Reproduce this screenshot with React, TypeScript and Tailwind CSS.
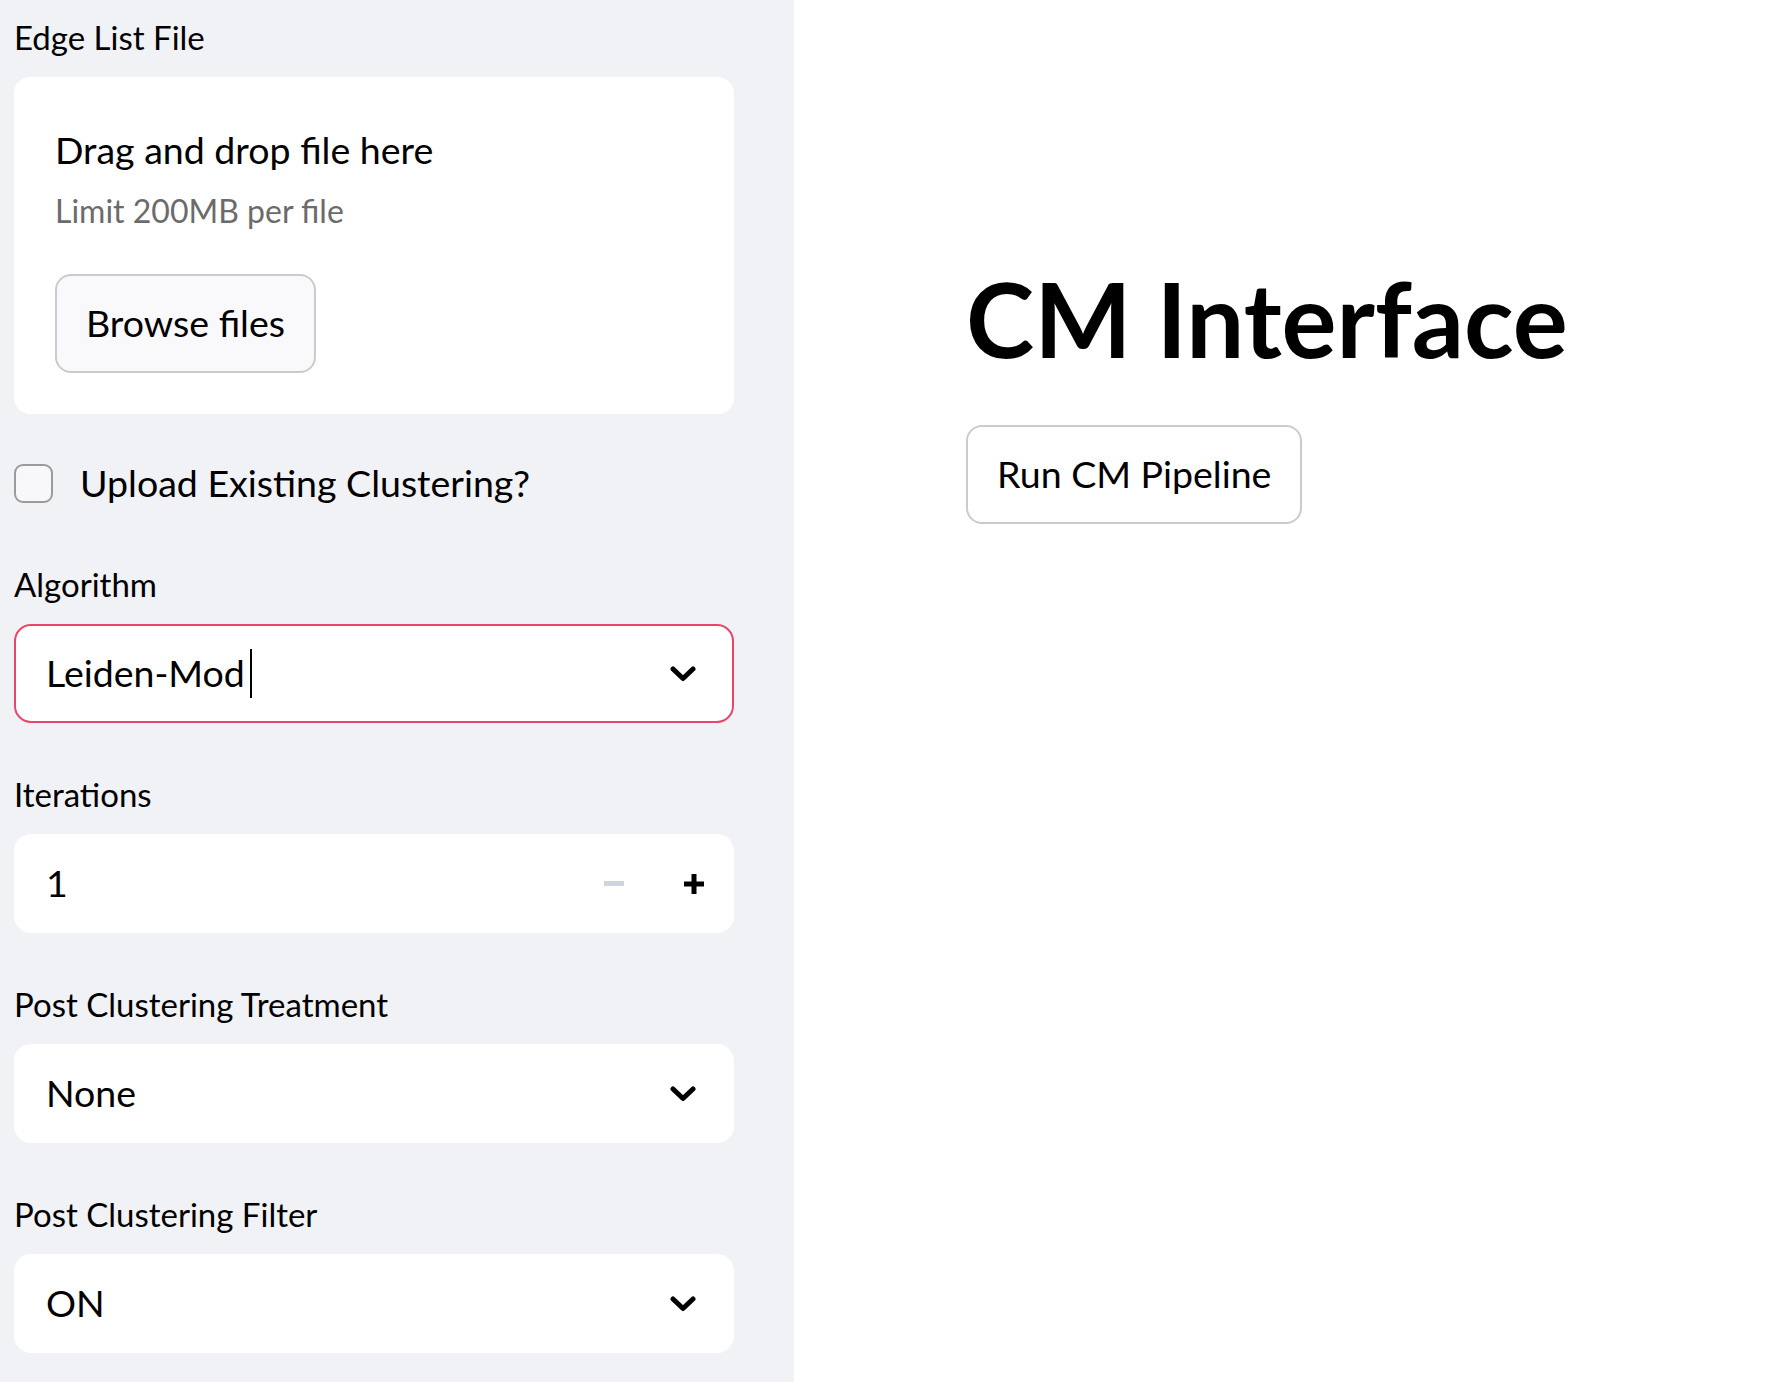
import type { ReactNode } from 'react';

const font = { fontFamily: 'Lato, "Liberation Sans", sans-serif' };

function Chevron() {
  return (
    <svg width="26" height="16" viewBox="0 0 26 16" fill="none">
      <path d="M3 3 L13 12.5 L23 3" stroke="#000" strokeWidth="5" strokeLinecap="round" strokeLinejoin="round" />
    </svg>
  );
}

function Label({ children }: { children: ReactNode }) {
  return <div className="h-[48px] leading-[48px] text-[33px] text-black mb-[16px]">{children}</div>;
}

function Select({ value, focused, caret }: { value: string; focused?: boolean; caret?: boolean }) {
  return (
    <div
      className={
        focused
          ? 'h-[99px] bg-white rounded-[17px] border-2 border-[#e8466a] flex items-center pl-[30px] pr-[36px]'
          : 'h-[99px] bg-white rounded-[17px] border-2 border-white flex items-center pl-[30px] pr-[36px]'
      }
    >
      <div className="flex-1 flex items-center text-[37.5px] text-black">
        <span>{value}</span>
        {caret && <span className="ml-[5px] w-[2px] h-[49px] bg-black" />}
      </div>
      <Chevron />
    </div>
  );
}

export default function App() {
  return (
    <div className="flex min-h-[1382px] w-[1792px] bg-white" style={font}>
      <aside className="w-[794px] shrink-0 bg-[#f0f2f6] pl-[14px] pr-[60px] pt-[13px]">
        <Label>Edge List File</Label>
        <div className="bg-white rounded-[16px] h-[337px] pl-[41px] pt-[47px]">
          <div className="leading-[52px] text-[37.5px] text-black">Drag and drop file here</div>
          <div className="mt-[13px] leading-[44px] text-[32px] text-[#6b6b6b]">Limit 200MB per file</div>
          <button className="mt-[41px] h-[99px] px-[29px] rounded-[16px] border-2 border-[#cbcbcb] bg-[#f9f9fb] text-[37.5px] text-black">
            Browse files
          </button>
        </div>

        <div className="mt-[50px] flex items-center h-[39px]">
          <div className="w-[39px] h-[39px] rounded-[9px] border-2 border-[#9b9b9b] bg-[#f8f8fa]" />
          <span className="ml-[27px] text-[37.5px] text-black">Upload Existing Clustering?</span>
        </div>

        <div className="mt-[57px]">
          <Label>Algorithm</Label>
          <Select value="Leiden-Mod" focused caret />
        </div>

        <div className="mt-[47px]">
          <Label>Iterations</Label>
          <div className="h-[99px] bg-white rounded-[17px] flex items-center pl-[32px] pr-[30px]">
            <span className="flex-1 text-[37.5px] text-black">1</span>
            <div className="w-[20px] h-[5px] bg-[#d0d4de] mr-[60px]" />
            <svg width="20" height="20" viewBox="0 0 20 20">
              <rect x="7.5" y="0" width="5" height="20" fill="#000" />
              <rect x="0" y="7.5" width="20" height="5" fill="#000" />
            </svg>
          </div>
        </div>

        <div className="mt-[47px]">
          <Label>Post Clustering Treatment</Label>
          <Select value="None" />
        </div>

        <div className="mt-[47px]">
          <Label>Post Clustering Filter</Label>
          <Select value="ON" />
        </div>
      </aside>

      <main className="flex-1 pl-[172px] pt-[256px]">
        <h1 className="text-[103px] font-bold leading-[125px] text-black">CM Interface</h1>
        <button className="mt-[44px] h-[99px] px-[29px] rounded-[16px] border-2 border-[#cbcbcb] bg-white text-[37.5px] text-black">
          Run CM Pipeline
        </button>
      </main>
    </div>
  );
}
